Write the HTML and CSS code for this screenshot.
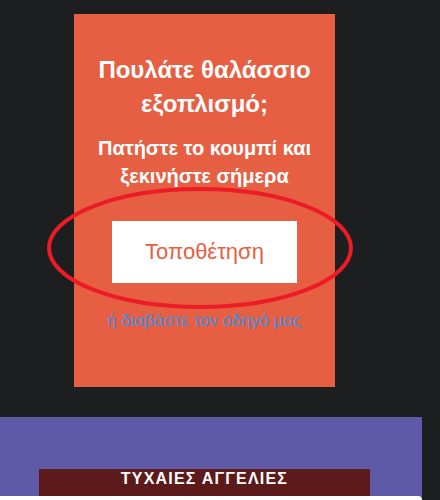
FILE: index.html
```html
<!DOCTYPE html>
<html lang="el">
<head>
    <meta charset="UTF-8">
    <meta name="viewport" content="width=device-width, initial-scale=1.0">
    <title>Πουλάτε θαλάσσιο εξοπλισμό</title>
    <link rel="stylesheet" href="styles.css">
</head>
<body>
    <div class="sell-box">
        <h2>Πουλάτε θαλάσσιο εξοπλισμό;</h2>
        <p class="sell-sub">Πατήστε το κουμπί και ξεκινήστε σήμερα</p>
        <div class="btn-wrap">
            <a class="sell-btn" href="#">Τοποθέτηση</a>
            <!-- κόκκινος κύκλος σημείωσης -->
            <svg class="mark" width="310" height="126" viewBox="0 0 310 126">
                <ellipse cx="155" cy="63" rx="151" ry="59" fill="none" stroke="#ec1c24" stroke-width="4"/>
            </svg>
        </div>
        <a class="guide-link" href="#">ή διαβάστε τον οδηγό μας</a>
    </div>

    <div class="random-ads">
        <div class="ads-title">ΤΥΧΑΙΕΣ ΑΓΓΕΛΙΕΣ</div>
        <div class="ads-list"></div>
    </div>
</body>
</html>
```

FILE: styles.css
```css
/* Γενικά */
body {
    margin: 0;
    background-color: #1d1e20;
    font-family: "Liberation Sans", Arial, sans-serif;
}

/* Κουτί πώλησης */
.sell-box {
    width: 261px;
    height: 373px;
    margin: 14px 0 0 74px;
    padding-top: 39px;
    box-sizing: border-box;
    background-color: #e65f43;
    color: #fff;
    text-align: center;
}

.sell-box h2 {
    margin: 0 10px;
    font-size: 24px;
    line-height: 34px;
    font-weight: bold;
}

.sell-sub {
    margin: 13px 10px 0;
    font-size: 20px;
    line-height: 28px;
    font-weight: bold;
}

.btn-wrap {
    position: relative;
    margin-top: 31px;
    height: 62px;
}

.sell-btn {
    display: block;
    width: 185px;
    height: 62px;
    margin-left: 38px;
    background: #fff;
    color: #e65f43;
    font-size: 22px;
    line-height: 62px;
    text-decoration: none;
}

.mark {
    position: absolute;
    left: -29px;
    top: -36px;
}

.guide-link {
    display: block;
    margin-top: 28px;
    color: #3d8fe0;
    font-size: 17px;
    line-height: 20px;
    text-decoration: none;
}

/* Τυχαίες αγγελίες */
.random-ads {
    width: 422px;
    margin-top: 30px;
    padding-top: 52px;
    background-color: #5f5aa8;
}

.ads-title {
    width: 331px;
    height: 27px;
    margin-left: 39px;
    background-color: #5c1a1a;
    color: #fff;
    font-size: 16px;
    font-weight: bold;
    letter-spacing: 1.2px;
    line-height: 20px;
    text-align: center;
}

.ads-list {
    height: 4px;
    background: #fff;
    border-radius: 0 10px 0 0;
}
```
